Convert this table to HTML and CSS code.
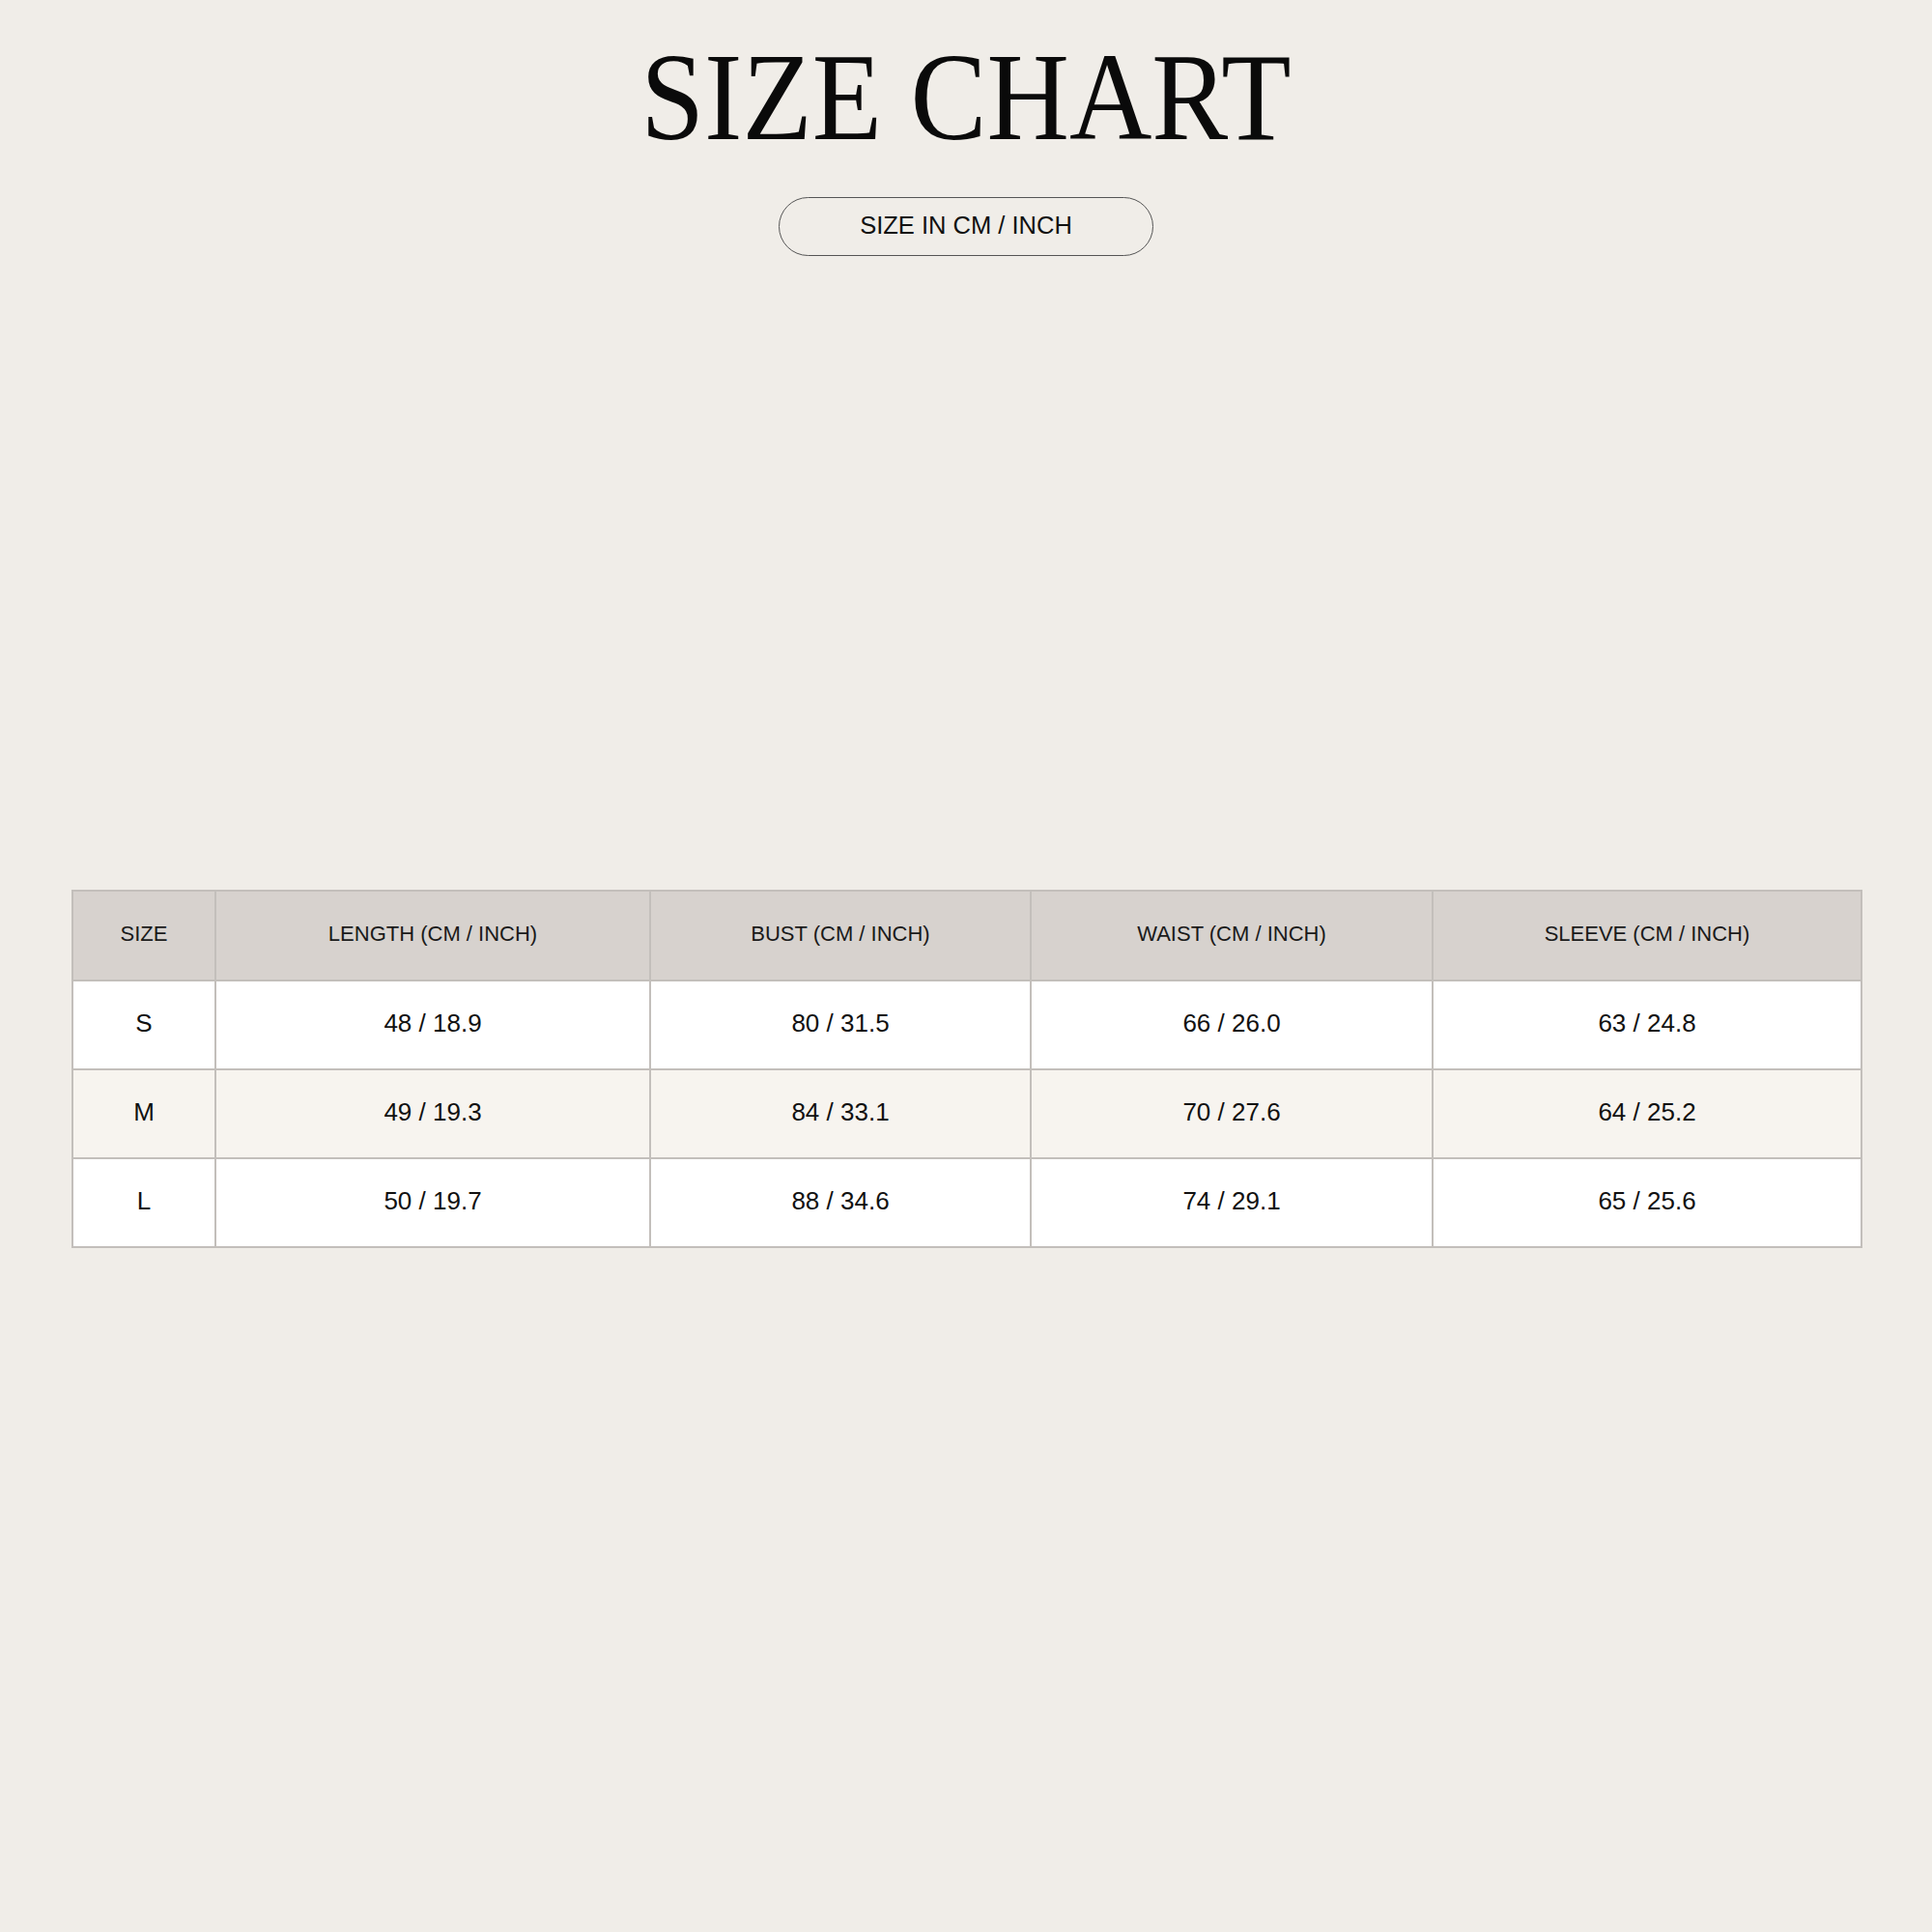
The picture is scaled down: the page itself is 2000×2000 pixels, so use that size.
FILE: index.html
```html
<!DOCTYPE html>
<html lang="en">
<head>
<meta charset="utf-8">
<title>Size Chart</title>
<link rel="stylesheet" href="styles.css">
</head>
<body>
<main class="page">
  <header class="head">
    <h1 class="title"><span class="title-text">SIZE CHART</span></h1>
    <div class="pill">SIZE IN CM / INCH</div>
  </header>
  <section class="chart-wrap">
    <table class="chart">
      <colgroup>
        <col class="c-size">
        <col class="c-length">
        <col class="c-bust">
        <col class="c-waist">
        <col class="c-sleeve">
      </colgroup>
      <thead>
        <tr>
          <th>SIZE</th>
          <th>LENGTH (CM / INCH)</th>
          <th>BUST (CM / INCH)</th>
          <th>WAIST (CM / INCH)</th>
          <th>SLEEVE (CM / INCH)</th>
        </tr>
      </thead>
      <tbody>
        <tr>
          <td>S</td><td>48 / 18.9</td><td>80 / 31.5</td><td>66 / 26.0</td><td>63 / 24.8</td>
        </tr>
        <tr class="alt">
          <td>M</td><td>49 / 19.3</td><td>84 / 33.1</td><td>70 / 27.6</td><td>64 / 25.2</td>
        </tr>
        <tr>
          <td>L</td><td>50 / 19.7</td><td>88 / 34.6</td><td>74 / 29.1</td><td>65 / 25.6</td>
        </tr>
      </tbody>
    </table>
  </section>
</main>
</body>
</html>
```

FILE: styles.css
```css
html, body {
  margin: 0;
  padding: 0;
  background: #f0ede8;
}

body {
  width: 2000px;
  min-height: 2000px;
  font-family: "Liberation Sans", Arial, sans-serif;
  color: #111;
}

.page {
  display: flex;
  flex-direction: column;
}

.head {
  display: flex;
  flex-direction: column;
  align-items: center;
}

.title {
  margin: 34px 0 0 0;
  font-family: "Liberation Serif", "Times New Roman", serif;
  font-weight: 400;
  font-size: 130px;
  line-height: 132px;
  color: #0a0a0a;
  text-align: center;
}

.title-text {
  display: inline-block;
  transform: scaleX(0.91);
  transform-origin: center;
}

.pill {
  margin-top: 38px;
  box-sizing: border-box;
  width: 388px;
  height: 61px;
  padding-bottom: 2px;
  border: 1.5px solid #555;
  border-radius: 31px;
  display: flex;
  align-items: center;
  justify-content: center;
  font-size: 25.5px;
  color: #111;
}

.chart-wrap {
  margin-top: 656px;
  padding: 0 74px 0 74px;
}

.chart {
  width: 100%;
  table-layout: fixed;
  border-collapse: collapse;
  border: 2px solid #b9b5b1;
}

.c-size { width: 148px; }
.c-length { width: 450px; }
.c-bust { width: 394px; }
.c-waist { width: 416px; }
.c-sleeve { width: 444px; }

.chart th,
.chart td {
  border: 2px solid #c3bfbb;
  padding: 0 0 4px 0;
  text-align: center;
  vertical-align: middle;
}

.chart th {
  height: 87px;
  background: #d7d2ce;
  font-weight: 400;
  font-size: 22px;
  color: #1a1a1a;
}

.chart td {
  height: 86px;
  background: #ffffff;
  font-size: 26px;
  color: #111;
}

.chart tr.alt td {
  background: #f7f4ef;
}
```
